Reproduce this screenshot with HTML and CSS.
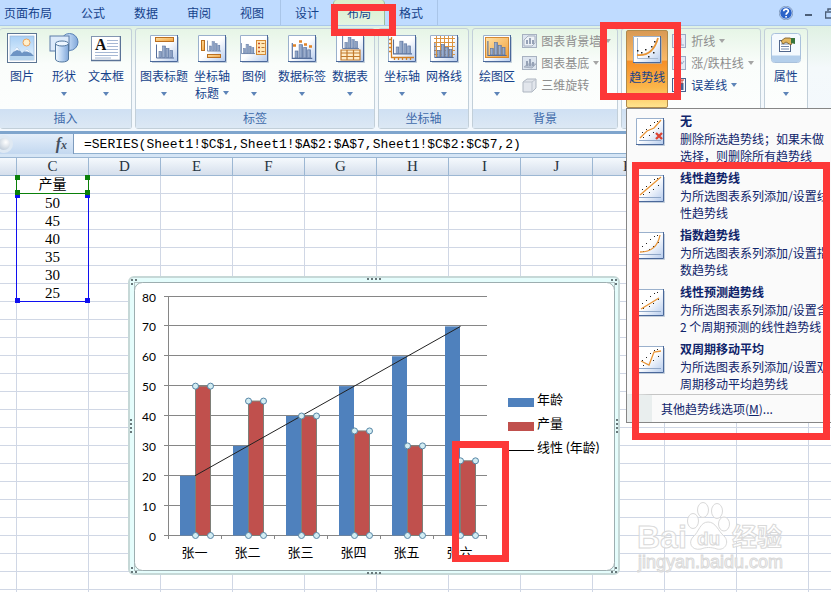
FILE: index.html
```html
<!DOCTYPE html>
<html lang="zh-CN">
<head>
<meta charset="utf-8">
<title>Excel</title>
<link rel="stylesheet" href="styles.css">
</head>
<body>
<svg class="defs" aria-hidden="true">
  <defs>
    <linearGradient id="paper" x1="0" y1="0" x2="1" y2="1"><stop offset=".5" stop-color="#fff"/><stop offset="1" stop-color="#b4caec"/></linearGradient>
    <linearGradient id="sky" x1="0" y1="0" x2="0" y2="1"><stop offset="0" stop-color="#a9d0f5"/><stop offset="1" stop-color="#e9f5ff"/></linearGradient>
    <linearGradient id="metal" x1="0" y1="0" x2="1" y2="0"><stop offset="0" stop-color="#f4faff"/><stop offset=".5" stop-color="#b9d3f2"/><stop offset="1" stop-color="#7fa6d8"/></linearGradient>
    <linearGradient id="bar" x1="0" y1="0" x2="1" y2="0"><stop offset="0" stop-color="#b3c2da"/><stop offset="1" stop-color="#6f89b4"/></linearGradient>
    <linearGradient id="gold" x1="0" y1="0" x2="1" y2="1"><stop offset="0" stop-color="#ffe2a6"/><stop offset="1" stop-color="#f0a03c"/></linearGradient>
    <symbol id="frame" viewBox="0 0 30 30"><path d="M3 29.5H29.500V4" fill="none" stroke="#9fb0c6" stroke-opacity=".6"/><rect x="1" y="2" width="27.500" height="26.500" fill="url(#paper)"/><path d="M1.500 28V2.500H28" fill="none" stroke="#9ab0cc"/><path d="M1 28.500H28.500V2" fill="none" stroke="#4a689a"/></symbol>
    <symbol id="bars" viewBox="0 0 18 14"><path d="M.5 0V13.500H18" fill="none" stroke="#566f9c"/><g fill="url(#bar)" stroke="#5b739e" stroke-width=".6"><rect x="3" y="7" width="2.500" height="6"/><rect x="6.500" y="1.500" width="3" height="11.500"/><rect x="10.500" y="4" width="2.500" height="9"/><rect x="14" y="6" width="2.500" height="7"/></g></symbol>
    <symbol id="dots" viewBox="0 0 30 30"><g fill="#222"><rect x="7" y="16" width="1" height="1"/><rect x="8" y="21" width="1" height="1"/><rect x="11" y="13" width="1" height="1"/><rect x="14" y="19" width="1" height="1"/><rect x="15" y="9" width="1" height="1"/><rect x="18" y="16" width="1" height="1"/><rect x="19" y="6" width="1" height="1"/><rect x="23" y="12" width="1" height="1"/><rect x="22" y="5" width="1" height="1"/></g><path d="M4 24.500H26" stroke="#8fa7c8"/></symbol>
  </defs>
</svg>

<div class="app">
  <nav class="tabs">
    <a href="#">页面布局</a><a href="#">公式</a><a href="#">数据</a><a href="#">审阅</a><a href="#">视图</a>
    <span class="context"><a href="#">设计</a><a href="#" class="active">布局</a><a href="#">格式</a></span>
    <span class="window-tools">
      <button aria-label="帮助"><svg width="14" height="14" viewBox="0 0 14 14"><circle cx="7" cy="7" r="6.300" fill="#2a62c8" stroke="#eaf3ff" stroke-width="1"/><circle cx="7" cy="7" r="6.800" fill="none" stroke="#54749f" stroke-width=".6"/><path d="M4.700 5.200C4.900 2.400 9.400 2.500 9.300 5.200C9.200 6.800 7.100 6.700 7.100 8.700M7.100 10V11.500" fill="none" stroke="#fff" stroke-width="1.700"/></svg></button>
      <button aria-label="最小化"><svg width="8" height="14" viewBox="0 0 8 14"><path d="M0 9H7" stroke="#4c5f78" stroke-width="2"/></svg></button>
      <button aria-label="还原"><svg width="10" height="14" viewBox="0 0 10 14"><path d="M3 5V3H10M.5 6H7V12H.5ZM.5 6H7" fill="none" stroke="#4c5f78" stroke-width="1.500"/></svg></button>
    </span>
  </nav>

  <div class="ribbon">
    <section class="group insert">
      <div class="tools">
        <button class="big"><svg viewBox="0 0 30 30"><rect x=".5" y=".5" width="29" height="29" fill="#fff" stroke="#5c7593"/><rect x="3" y="3" width="24" height="24" fill="url(#sky)" stroke="#9cb8d8" stroke-width=".7"/><circle cx="19.500" cy="9.500" r="3.500" fill="#fff0cd" stroke="#eda45b"/><path d="M3 23L10 14L15 20L20 16L27 23Z" fill="#6d94c4"/><path d="M6 19L10 14L13 18L10 17ZM17 18.500L20 16L24 20L20 18.500Z" fill="#f2f8ff"/><path d="M3 23H27V27H3Z" fill="#b7d5ee"/></svg><span>图片</span></button>
        <button class="big"><svg viewBox="0 0 30 30"><circle cx="20.500" cy="9" r="8.500" fill="url(#metal)" stroke="#5880b4"/><rect x="1" y="3" width="19" height="15" fill="#dceafa" stroke="#5c7da8"/><path d="M6.500 11V26C6.500 30 19.500 30 19.500 26V11Z" fill="url(#metal)" stroke="#54789f"/><ellipse cx="13" cy="10.500" rx="6.500" ry="2.500" fill="#edf6ff" stroke="#54789f"/></svg><span>形状</span><i class="arrow"></i></button>
        <button class="big"><svg viewBox="0 0 30 30"><rect x=".5" y="3.500" width="29" height="24" fill="#fff" stroke="#8295b0"/><path d="M0 27.500H29.500V3" fill="none" stroke="#5b7396" stroke-width="1.500"/><path d="M16 7.500H27M16 10.500H27M16 13.500H27M16 16.500H27M4 19.500H27M4 22.500H27M4 25H20" stroke="#a6b8d4"/><text x="4" y="17" class="glyph-a">A</text></svg><span>文本框</span><i class="arrow"></i></button>
      </div>
      <h2>插入</h2>
    </section>

    <section class="group labels">
      <div class="tools">
        <button class="big"><svg viewBox="0 0 30 30"><use href="#frame"/><rect x="6.500" y="4.500" width="18" height="4" fill="url(#gold)" stroke="#ba6f20"/><use href="#bars" x="7" y="11" width="18" height="15"/></svg><span>图表标题</span><i class="arrow"></i></button>
        <button class="big"><svg viewBox="0 0 30 30"><use href="#frame"/><rect x="4.500" y="7.500" width="3" height="10" fill="url(#gold)" stroke="#ba6f20"/><use href="#bars" x="10" y="7" width="14" height="12"/><rect x="10.500" y="21.500" width="13" height="3" fill="url(#gold)" stroke="#ba6f20"/></svg><span>坐标轴</span><span class="second">标题<i class="arrow"></i></span></button>
        <button class="big"><svg viewBox="0 0 30 30"><use href="#frame"/><use href="#bars" x="2" y="9" width="14" height="13"/><rect x="17.500" y="7.500" width="9" height="14" fill="#ffe6b4" stroke="#d58a33"/><path d="M19 10.500H21M19 14.500H21M19 18.500H21" stroke="#c74c2c" stroke-width="1.500"/><path d="M22.500 10.500H25.500M22.500 14.500H25.500M22.500 18.500H25.500" stroke="#b87a37"/></svg><span>图例</span><i class="arrow"></i></button>
        <button class="big"><svg viewBox="0 0 30 30"><use href="#frame"/><use href="#bars" x="4" y="10" width="22" height="16"/><path d="M6 12.500H9M12 8.500H15M17 11.500H20M22 13.500H25" stroke="#e18428" stroke-width="2.500"/></svg><span>数据标签</span><i class="arrow"></i></button>
        <button class="big"><svg viewBox="0 0 30 30"><use href="#frame"/><use href="#bars" x="7" y="3" width="17" height="13"/><path d="M6 17H25V27H6ZM6 20H25M6 23.500H25M12 17V27M18.500 17V27" fill="#ffecc8" stroke="#c27a2c" stroke-width="1.200"/></svg><span>数据表</span><i class="arrow"></i></button>
      </div>
      <h2>标签</h2>
    </section>

    <section class="group axes">
      <div class="tools">
        <button class="big"><svg viewBox="0 0 30 30"><use href="#frame"/><use href="#bars" x="6" y="6" width="19" height="16"/><path d="M4.500 4V24.500H27M2 6.500H5M2 10.500H5M2 14.500H5M2 18.500H5M7.500 24V27M11.500 24V27M15.500 24V27M19.500 24V27M23.500 24V27" fill="none" stroke="#d28025" stroke-width="1.300"/></svg><span>坐标轴</span><i class="arrow"></i></button>
        <button class="big"><svg viewBox="0 0 30 30"><use href="#frame"/><path d="M5 5.500H26M5 9.500H26M5 13.500H26M5 17.500H26M5 21.500H26M7.500 3V25M11.500 3V25M15.500 3V25M19.500 3V25M23.500 3V25" stroke="#dc9440"/><use href="#bars" x="5" y="10" width="20" height="15"/></svg><span>网格线</span><i class="arrow"></i></button>
      </div>
      <h2>坐标轴</h2>
    </section>

    <section class="group background">
      <div class="tools">
        <button class="big"><svg viewBox="0 0 30 30"><use href="#frame"/><rect x="3.500" y="4.500" width="23" height="20" fill="url(#gold)" stroke="#d58a33"/><use href="#bars" x="5" y="8" width="20" height="15"/></svg><span>绘图区</span><i class="arrow"></i></button>
        <div class="stack">
          <button class="small off" disabled><svg viewBox="0 0 15 15"><rect x=".5" y=".5" width="14" height="13" fill="#dde5ef" stroke="#a7b1c0"/><path d="M2 12V6L6 2H13V9L10 12Z" fill="#eef2f7" stroke="#a7b1c0"/><path d="M5 10V6M8 10V4M11 10V6" stroke="#96a2b6" stroke-width="2"/></svg>图表背景墙<i class="arrow"></i></button>
          <button class="small off" disabled><svg viewBox="0 0 15 15"><rect x=".5" y=".5" width="14" height="13" fill="#dde5ef" stroke="#a7b1c0"/><path d="M2 11L6 8H14L10 12Z" fill="#b8c3d4" stroke="#a7b1c0"/><path d="M5 10V5M8 10V3M11 10V6" stroke="#96a2b6" stroke-width="2"/></svg>图表基底<i class="arrow"></i></button>
          <button class="small off" disabled><svg viewBox="0 0 15 15"><path d="M1 4L5 1H14V10L10 14H1Z" fill="#e2e6ec" stroke="#adb5c0"/><path d="M1 4H10V14M10 4L14 1" fill="none" stroke="#bcc3cd"/></svg>三维旋转</button>
        </div>
      </div>
      <h2>背景</h2>
    </section>

    <section class="group analysis">
      <div class="tools">
        <button class="big trend"><svg viewBox="0 0 30 30"><use href="#frame"/><path d="M5.500 4V24.500H26" fill="none" stroke="#a8bad2"/><path d="M5 21C16 22 23 15 26 4" fill="none" stroke="#e89435" stroke-width="1.800"/><g fill="#222"><rect x="5" y="16" width="1.500" height="1.500"/><rect x="9" y="18" width="1.500" height="1.500"/><rect x="13" y="15" width="1.500" height="1.500"/><rect x="16" y="22" width="1.500" height="1.500"/><rect x="19" y="12" width="1.500" height="1.500"/><rect x="21" y="18" width="1.500" height="1.500"/><rect x="22" y="7" width="1.500" height="1.500"/></g></svg><span>趋势线</span><i class="arrow"></i></button>
        <div class="stack">
          <button class="small off" disabled><svg viewBox="0 0 15 15"><rect x=".5" y=".5" width="13" height="13" fill="#e4ebf5" stroke="#9aa9c4"/><path d="M4 3V11M9 4V11M2 11H12" stroke="#9aa9c4"/></svg>折线<i class="arrow"></i></button>
          <button class="small off" disabled><svg viewBox="0 0 15 15"><rect x=".5" y=".5" width="13" height="13" fill="#e4ebf5" stroke="#9aa9c4"/><path d="M3 4L10 8L12 5M3 10L10 6" fill="none" stroke="#9aa9c4"/></svg>涨/跌柱线<i class="arrow"></i></button>
          <button class="small"><svg viewBox="0 0 15 15"><rect x=".5" y=".5" width="13" height="13" fill="#f4f8ff" stroke="#46618f"/><path d="M5 12V7M10 12V5" stroke="#48618f" stroke-width="3"/><path d="M5 3V8M8 2H12M10 2V6" stroke="#c5402f"/></svg>误差线<i class="arrow"></i></button>
        </div>
      </div>
      <div class="group-foot"></div>
    </section>

    <section class="group properties">
      <div class="tools">
        <button class="big"><svg viewBox="0 0 30 30"><rect x=".5" y=".5" width="29" height="29" rx="3" fill="#f5fafe" stroke="#a9c1dc"/><path d="M1 22.500H29V27Q29 29 27 29H3Q1 29 1 27Z" fill="#b4cfeb"/><rect x="8.500" y="7.500" width="11" height="11" fill="#fff" stroke="#50668c"/><path d="M10 11H18M10 13.500H18M10 16H18" stroke="#7186aa"/><path d="M10 8L14 5H19L22 7L20 12L15 9L12 11Z" fill="#e4b75f" stroke="#6f5220" stroke-width=".8"/><path d="M20 5H24V11L20 10Z" fill="#38743a"/></svg><span>属性</span><i class="arrow"></i></button>
      </div>
      <div class="group-foot"></div>
    </section>
  </div>

  <div class="formula-bar">
    <div class="formula-tools"><span class="knob"></span><button aria-label="插入函数">f<small>x</small></button></div>
    <input aria-label="编辑栏" value="=SERIES(Sheet1!$C$1,Sheet1!$A$2:$A$7,Sheet1!$C$2:$C$7,2)">
  </div>

  <main class="sheet">
    <table>
      <colgroup><col class="cut"><col><col><col><col><col><col><col><col><col><col><col><col></colgroup>
      <thead><tr><th></th><th>C</th><th>D</th><th>E</th><th>F</th><th>G</th><th>H</th><th>I</th><th>J</th><th>K</th><th></th><th></th><th></th></tr></thead>
      <tbody id="cells"></tbody>
    </table>
  </main>
</div>

<div class="range name-range"><i></i><i></i><i></i><i></i></div>
<div class="range value-range"><i></i><i></i><i></i><i></i></div>

<div class="chart">
  <svg id="chart" viewBox="128 276 492 299" role="img" aria-label="年龄 产量">
    <rect x="129" y="277" width="490" height="297" rx="5" fill="#e5fdfc" stroke="#c6d8d7" stroke-width="2"/>
    <rect x="134.500" y="282.500" width="480" height="288" fill="#e5fdfc" stroke="#b4c4c5"/>
    <rect x="134.500" y="282.500" width="480" height="288" rx="8" fill="#fff" stroke="#9daeb0"/>
    <g id="grips" fill="#68787b"></g>
    <g id="plot"></g>
    <g class="legend">
      <rect x="508" y="398" width="26" height="9" fill="#4f81bd"/><text x="537" y="404">年龄</text>
      <rect x="508" y="422" width="26" height="9" fill="#c0504d"/><text x="537" y="428">产量</text>
      <path d="M508 450.500H534" stroke="#000"/><text x="537" y="452">线性 (年龄)</text>
    </g>
  </svg>
</div>

<div class="menu" role="menu">
  <button role="menuitem"><svg viewBox="0 0 30 30"><use href="#frame"/><use href="#dots"/><path d="M5 22L12 15L19 12L26 4" fill="none" stroke="#e89435" stroke-width="1.300"/><path d="M21 17L27 23M27 17L21 23" stroke="#dc4433" stroke-width="2.300"/></svg><span><b>无</b>删除所选趋势线；如果未做<br>选择，则删除所有趋势线</span></button>
  <button role="menuitem"><svg viewBox="0 0 30 30"><use href="#frame"/><use href="#dots"/><path d="M5 22L26 4" stroke="#e89435" stroke-width="1.300"/></svg><span><b>线性趋势线</b>为所选图表系列添加/设置线<br>性趋势线</span></button>
  <button role="menuitem"><svg viewBox="0 0 30 30"><use href="#frame"/><use href="#dots"/><path d="M5 22C16 22 23 16 25 5" fill="none" stroke="#e89435" stroke-width="1.300"/></svg><span><b>指数趋势线</b>为所选图表系列添加/设置指<br>数趋势线</span></button>
  <button role="menuitem"><svg viewBox="0 0 30 30"><use href="#frame"/><use href="#dots"/><path d="M6 22L24 11" stroke="#e89435" stroke-width="1.300"/></svg><span><b>线性预测趋势线</b>为所选图表系列添加/设置含<br>2 个周期预测的线性趋势线</span></button>
  <button role="menuitem"><svg viewBox="0 0 30 30"><use href="#frame"/><use href="#dots"/><path d="M6 17L14 21L19 8L26 7" fill="none" stroke="#e89435" stroke-width="1.300"/></svg><span><b>双周期移动平均</b>为所选图表系列添加/设置双<br>周期移动平均趋势线</span></button>
  <button role="menuitem" class="more">其他趋势线选项(<u>M</u>)...</button>
</div>

<div class="mark mark-tab"></div>
<div class="mark mark-trend"></div>
<div class="mark mark-menu"></div>
<div class="mark mark-bar"></div>

<svg class="watermark" viewBox="0 0 150 76">
  <g class="ink">
    <text x="0" y="48" class="brand">Bai</text>
    <ellipse cx="56" cy="21" rx="5.500" ry="7.500"/><ellipse cx="66" cy="10" rx="5.500" ry="7.500"/><ellipse cx="80" cy="11" rx="5.500" ry="7.500"/><ellipse cx="87" cy="24" rx="5.500" ry="7"/>
    <path d="M71 22C79 22 81 31 87 36C93 42 88 51 80 49C74 47 69 47 64 49C54 51 51 42 56 37C62 32 63 22 71 22Z"/>
    <text x="60" y="45" class="du">du</text>
    <text x="95" y="46" class="cn">经验</text>
    <text x="1" y="68" class="site">jingyan.baidu.com</text>
  </g>
</svg>
<script src="page.js"></script>
</body>
</html>
```

FILE: styles.css
```css
* { box-sizing: border-box; }

html, body { margin: 0; height: 100%; overflow: hidden; }

body {
  position: relative;
  background: #fff;
  color: #15428b;
  font: 12px/16px "Noto Sans CJK SC", sans-serif;
}

button {
  border: 0;
  padding: 0;
  background: none;
  color: inherit;
  font: inherit;
}

.defs { position: absolute; width: 0; height: 0; }
.app { height: 100%; overflow: hidden; }

/* Tabs */
.tabs {
  display: flex;
  align-items: center;
  gap: 29px;
  height: 26px;
  padding-left: 4px;
  background: #bfdbff;
  border-bottom: 1px solid #a9c7ea;
  white-space: nowrap;
}
.tabs a { color: #15428b; text-decoration: none; line-height: 25px; }
.context {
  display: flex;
  margin-left: -13px;
  border-left: 1px solid #a9c5e8;
  border-right: 1px solid #a9c5e8;
}
.context a { padding: 0 14px; }
.context .active {
  padding: 0 13px;
  background: linear-gradient(#d9efc8, #e4f4e2);
  border: solid #9cbd9a;
  border-width: 0 1px;
  border-radius: 4px 4px 0 0;
}
.window-tools { display: flex; gap: 12px; margin-left: auto; margin-right: -4px; }
.window-tools svg { display: block; }

/* Ribbon */
.ribbon {
  display: flex;
  gap: 3px;
  height: 105px;
  padding: 2px 0;
  background: linear-gradient(#dff1e3, #f4f9fb 40%, #f3f8fd);
}
.group {
  display: flex;
  flex-direction: column;
  justify-content: space-between;
  border: 1px solid #c2cfd9;
  border-radius: 3px;
  background: linear-gradient(#e6f5e6, #fafdfb 35%, #fdfefe);
}
.group h2, .group-foot {
  margin: 0;
  height: 19px;
  background: linear-gradient(#cfe0f3, #dce8f4);
  color: #3e6aaa;
  font-size: 12px;
  font-weight: normal;
  line-height: 18px;
  text-align: center;
}
.tools { display: flex; gap: 6px; padding: 4px 6px 0 4px; }
.insert { border-left: 0; }
.insert .tools { padding-right: 7px; }
.axes .tools { padding-left: 5px; }
.background .tools { gap: 7px; padding-left: 6px; }
.analysis .tools { gap: 4px; padding: 1px 6px 0 4px; }
.analysis .stack { padding-top: 3px; }
.properties .tools { padding: 4px 3px 0; }

.big {
  display: flex;
  flex-direction: column;
  align-items: center;
  min-width: 36px;
  white-space: nowrap;
}
.big svg { width: 30px; height: 30px; }
.big > span { margin-top: 5px; }
.big > .second { display: flex; align-items: center; gap: 4px; margin-top: 1px; }
.arrow {
  border: 3px solid transparent;
  border-top: 4px solid #5d84b8;
  border-bottom: 0;
}
.big > .arrow { margin-top: 8px; }
.trend {
  width: 42px;
  height: 78px;
  padding-top: 3px;
  border: 1px solid #b08b4d;
  border-radius: 2px;
  background: linear-gradient(#d99a55, #f9b968 38%, #f68f27 40%, #fbb74b 75%, #ffe48e);
}
.stack { display: flex; flex-direction: column; align-items: flex-start; gap: 6px; }
.small { display: flex; align-items: center; gap: 4px; height: 16px; white-space: nowrap; }
.small svg { width: 15px; height: 15px; }
.off { color: #8d8d8d; }
.off .arrow { border-top-color: #a5a5a5; }
.glyph-a { font: bold 16px "Liberation Serif", serif; fill: #111; }

/* Formula bar */
.formula-bar {
  display: flex;
  height: 26px;
  border-top: 3px solid #7fa5cd;
  border-bottom: 3px solid #d5e5f5;
  background: #c7dbf3;
}
.formula-tools {
  display: flex;
  justify-content: space-between;
  align-items: center;
  width: 74px;
  padding-right: 6px;
  border-right: 1px solid #7d9bbd;
  background: linear-gradient(#e4eefa, #c3d8f0);
}
.formula-tools button { color: #44505f; font: italic bold 16px/18px "Liberation Serif", serif; }
.formula-tools small { font-size: 12px; }
.knob {
  width: 18px;
  height: 18px;
  margin-left: -5px;
  border: 3px solid #dfe9f3;
  border-radius: 50%;
  background: radial-gradient(circle at 65% 35%, #fff, #aebdce);
}
.formula-bar input {
  flex: 1;
  min-width: 0;
  border: 0;
  border-bottom: 1px solid #8fb0cf;
  padding: 2px 10px 0;
  background: #fff;
  color: #000;
  font: 13px "Liberation Mono", monospace;
  outline: 0;
}

/* Worksheet */
.sheet table { width: 881px; table-layout: fixed; border-collapse: separate; border-spacing: 0; }
.sheet col { width: 72px; }
.sheet .cut { width: 17px; }
.sheet th {
  height: 19px;
  padding: 0;
  border: solid #9cb7d3;
  border-width: 1px 1px 1px 0;
  background: linear-gradient(#f5f9fd, #d5dfec);
  color: #27343f;
  font: 15px/17px "Liberation Serif", serif;
}
.sheet td {
  height: 18px;
  padding: 1px 0 0;
  border: solid #d0d7e5;
  border-width: 0 1px 1px 0;
  color: #000;
  font: 15px/16px "Liberation Serif", "Noto Sans CJK SC", serif;
  text-align: center;
}
.sheet tr:first-child td { font-size: 14px; }

.range { position: absolute; left: 16px; width: 73px; border: 1px solid; }
.range i { position: absolute; width: 5px; height: 5px; background: currentColor; }
.range i:nth-child(odd) { left: -2px; }
.range i:nth-child(even) { right: -2px; }
.range i:nth-child(-n+2) { top: -1px; }
.range i:nth-child(n+3) { bottom: -2px; }
.name-range { top: 176px; height: 18px; border-top: 0; color: #0a800a; }
.value-range { top: 194px; height: 108px; border-top: 0; color: #1010f0; }
.name-range { z-index: 1; }

/* Chart object */
.chart { position: absolute; left: 128px; top: 276px; width: 492px; }
.chart svg { display: block; width: 100%; }
.chart text { font: 13px Lato, "Noto Sans CJK SC", sans-serif; fill: #000; }
.chart .value { font-size: 12px; text-anchor: end; }
.chart .category { text-anchor: middle; }

/* Trendline menu */
.menu {
  position: absolute;
  left: 626px;
  right: 0;
  top: 108px;
  border: solid #868686;
  border-width: 1px 0 1px 1px;
  background: #fafafa;
  color: #0f246a;
  overflow: hidden;
  z-index: 2;
}
.menu button {
  display: flex;
  gap: 15px;
  width: 100%;
  height: 57px;
  padding: 3px 0 2px 8px;
  line-height: 17px;
  text-align: left;
  white-space: nowrap;
}
.menu svg { flex: none; width: 30px; height: 30px; margin-top: 4px; }
.menu b { display: block; line-height: 18px; }
.menu .more {
  display: block;
  height: 28px;
  padding: 0 0 0 9px;
  border-top: 1px solid #c5c5c5;
  border-left: 25px solid #e9eeee;
  line-height: 28px;
}

/* Red annotation boxes */
.mark { position: absolute; border: 7px solid #fd3838; z-index: 3; }
.mark-tab { left: 331px; top: 4px; width: 65px; height: 32px; }
.mark-trend { left: 600px; top: 22px; width: 81px; height: 78px; }
.mark-menu { left: 632px; top: 162px; width: 198px; height: 278px; }
.mark-bar { left: 452px; top: 441px; width: 57px; height: 121px; }

.watermark { position: absolute; left: 637px; top: 500px; width: 150px; }
.ink { fill: #fff; fill-opacity: .7; stroke: #d9d9d9; }
.watermark text { font-family: "Liberation Sans", "Noto Sans CJK SC", sans-serif; font-weight: bold; }
.watermark .brand { font-size: 32px; }
.watermark .du { font-size: 19px; }
.watermark .cn { font-size: 25px; }
.watermark .site { font-size: 18px; font-weight: normal; stroke-width: 1; }
```

FILE: page.js
```js
// Worksheet rows: only column C holds data.
const cellValues = ['产量', 50, 45, 40, 35, 30, 25];
let rows = '';
for (let r = 0; r < 24; r++) {
  rows += '<tr><td></td><td>' + (cellValues[r] ?? '') + '</td>' + '<td></td>'.repeat(11) + '</tr>';
}
document.getElementById('cells').innerHTML = rows;

// Column chart
const names = ['张一', '张二', '张三', '张四', '张五', '张六'];
const ages = [20, 30, 40, 50, 60, 70];
const output = [50, 45, 40, 35, 30, 25];
const left = 168.5, base = 535.5, step = 53;
const yOf = v => base - v * 239 / 80;
let out = '';
for (let v = 0; v <= 80; v += 10) {
  const y = Math.round(yOf(v)) - 0.5;
  out += `<path d="M164 ${y}H487" stroke="#868686"/><text class="value" x="156" y="${y + 5}">${v}</text>`;
}
out += `<path d="M${left} 296V539" stroke="#868686"/>`;
names.forEach((name, i) => {
  const x = left + i * step;
  out += `<path d="M${x + step} 536V539" stroke="#868686"/>`;
  out += `<rect x="${x + 11.5}" y="${yOf(ages[i])}" width="15" height="${base - yOf(ages[i])}" fill="#4f81bd"/>`;
  out += `<rect x="${x + 27}" y="${yOf(output[i])}" width="15" height="${base - yOf(output[i])}" fill="#c0504d" stroke="#7e7f78"/>`;
  out += `<text class="category" x="${x + 26}" y="557">${name}</text>`;
});
out += `<path d="M195 ${yOf(20)}L460.500 ${yOf(70)}" stroke="#222"/>`;
names.forEach((name, i) => {
  for (const dx of [27, 42]) {
    for (const y of [yOf(output[i]), base]) {
      out += `<circle cx="${left + i * step + dx}" cy="${y}" r="3" fill="#d3edf3" stroke="#5685a5"/>`;
    }
  }
});
document.getElementById('plot').innerHTML = out;

// Resize grips on the chart frame
let grips = '';
const dot = (x, y) => { grips += `<rect x="${x}" y="${y}" width="2" height="2"/>`; };
for (let k = 0; k < 4; k++) {
  dot(367 + k * 4, 278); dot(367 + k * 4, 572);
  dot(130, 419 + k * 4); dot(616, 419 + k * 4);
}
[[131, 279], [135, 279], [131, 283], [611, 279], [615, 279], [615, 283],
 [131, 567], [131, 571], [135, 571], [611, 571], [615, 571], [615, 567]].forEach(p => dot(...p));
document.getElementById('grips').innerHTML = grips;
```
